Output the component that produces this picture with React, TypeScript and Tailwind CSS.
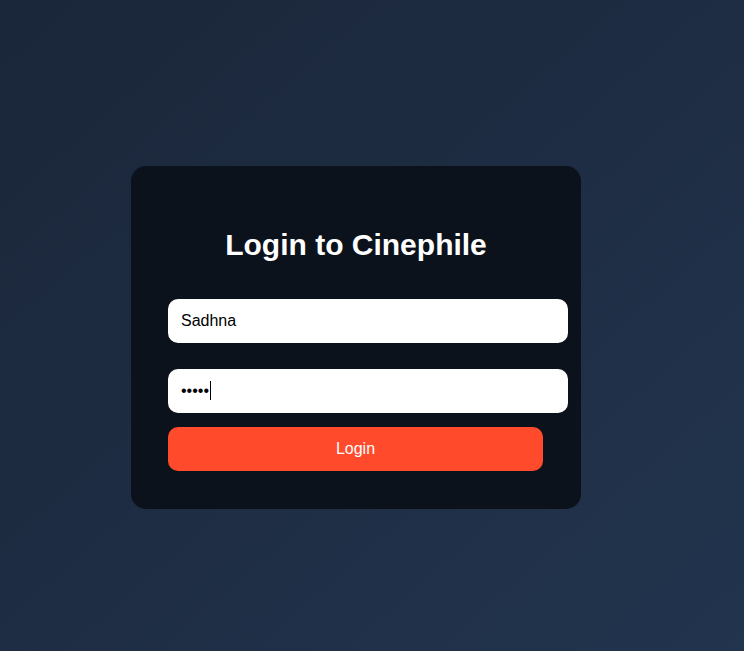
import React, { useState } from 'react';

export default function App() {
  const [username, setUsername] = useState('Sadhna');
  const [password, setPassword] = useState('12345');

  return (
    <div
      className="min-h-screen w-full bg-gradient-to-br from-[#1a2639] to-[#22344e] pl-[131px] pt-[166px]"
      style={{ fontFamily: '"Liberation Sans", Arial, sans-serif' }}
    >
      <div className="w-[450px] rounded-[15px] bg-[#0c121c] pt-[62px] pb-[38px]">
        <h1 className="text-center text-[30px] font-bold leading-[34px] text-white">Login to Cinephile</h1>
        <form className="mt-[37px] flex flex-col pl-[37px]" onSubmit={e => e.preventDefault()}>
          <input
            type="text"
            value={username}
            onChange={e => setUsername(e.target.value)}
            className="h-[44px] w-[400px] rounded-[10px] bg-white px-[13px] text-[16px] text-black outline-none"
          />
          <div className="relative mt-[26px] w-[400px]">
            <input
              type="password"
              value={password}
              onChange={e => setPassword(e.target.value)}
              className="h-[44px] w-full rounded-[10px] bg-white px-[13px] text-[16px] text-black caret-transparent outline-none"
            />
            {/* text caret as in the focused field */}
            <span className="pointer-events-none absolute left-[42px] top-[12px] h-[19px] w-px bg-black" />
          </div>
          <button
            type="submit"
            className="mt-[14px] h-[44px] w-[375px] rounded-[10px] bg-[#ff4b2b] text-[16px] text-white"
          >
            Login
          </button>
        </form>
      </div>
    </div>
  );
}
